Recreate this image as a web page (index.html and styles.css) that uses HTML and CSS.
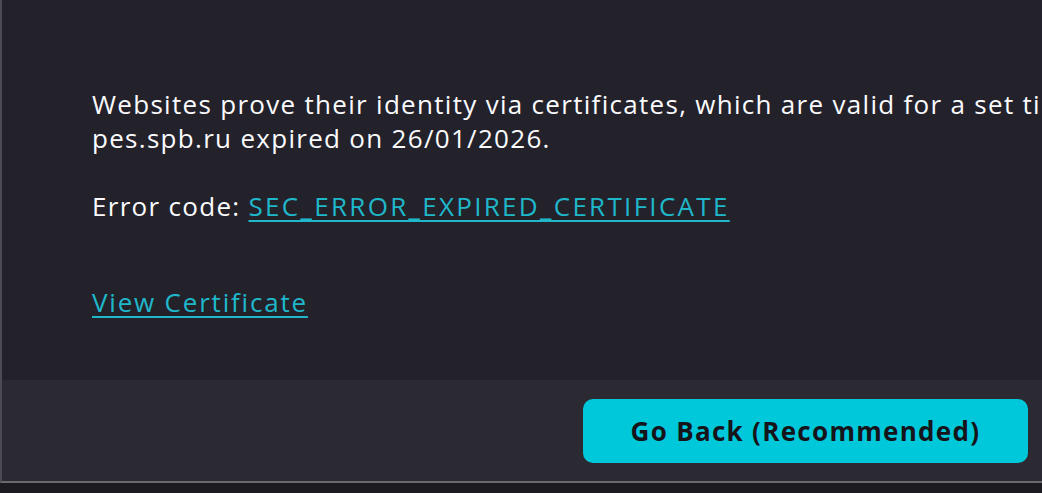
FILE: index.html
```html
<!DOCTYPE html>
<html lang="en">
<head>
<meta charset="utf-8">
<title>Warning: Potential Security Risk Ahead</title>
<link rel="stylesheet" href="styles.css">
</head>
<body>
<div class="frame">
  <main class="content">
    <div class="text">
      <p class="para">Websites prove their identity via certificates, which are valid for a set time period. The certificate for<br>pes.spb.ru expired on 26/01/2026.</p>
      <p class="para">Error code: <a class="link code" href="#">SEC_ERROR_EXPIRED_CERTIFICATE</a></p>
      <p class="para view"><a class="link cert" href="#">View Certificate</a></p>
    </div>
  </main>
  <footer class="footer">
    <button class="primary">Go Back (Recommended)</button>
  </footer>
</div>
</body>
</html>
```
FILE: styles.css
```css
html, body {
  margin: 0;
  padding: 0;
  background: #1c1b22;
  width: 1042px;
  height: 493px;
  overflow: hidden;
}
.frame {
  box-sizing: border-box;
  width: 1042px;
  height: 483px;
  display: flex;
  flex-direction: column;
  border-left: 2px solid #4c4b55;
  border-bottom: 2px solid #6a6971;
}
.content {
  flex: 1;
  background: #23222b;
  padding: 87px 0 0 90px;
  overflow: hidden;
  font-family: "Open Sans", "Noto Sans", sans-serif;
  font-size: 26px;
  line-height: 34px;
  letter-spacing: 1.3px;
  color: #fbfbfe;
}
.text {
  white-space: nowrap;
}
.para {
  margin: 0 0 34px;
}
.view {
  margin-top: 62px;
}
.link {
  color: #1fb8cb;
  text-decoration: underline;
  text-underline-offset: 4px;
  text-decoration-thickness: 2px;
}
.code {
  letter-spacing: 2.3px;
}
.cert {
  letter-spacing: 1.8px;
}
.footer {
  height: 101px;
  background: #2b2a33;
  display: flex;
  justify-content: flex-end;
  align-items: flex-start;
  padding: 19px 14px 0 0;
  box-sizing: border-box;
}
.primary {
  width: 445px;
  height: 64px;
  border: none;
  border-radius: 10px;
  background: #00c8db;
  color: #15141a;
  font-family: "Open Sans", "Noto Sans", sans-serif;
  font-weight: 700;
  font-size: 26px;
  letter-spacing: 1.3px;
  padding: 0;
}
```
